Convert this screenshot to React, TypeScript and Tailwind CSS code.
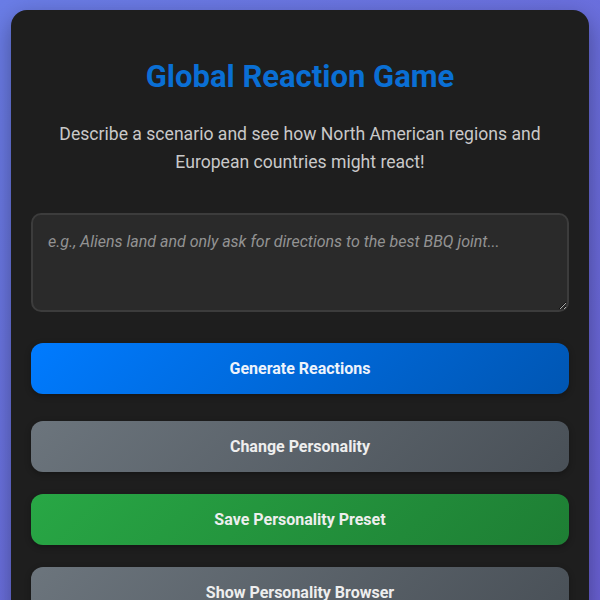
import React, { useState } from 'react';

const App: React.FC = () => {
  const [scenario, setScenario] = useState('');

  const buttons = [
    { label: 'Change Personality', className: 'mt-[27px] bg-linear-135 from-[#6c757d] to-[#495057]' },
    { label: 'Save Personality Preset', className: 'mt-[22px] bg-linear-135 from-[#28a745] to-[#1e7e34]' },
    { label: 'Show Personality Browser', className: 'mt-[22px] bg-linear-135 from-[#6c757d] to-[#495057]' },
  ];

  return (
    <div
      className="min-h-[600px] bg-linear-135 from-[#6a7de6] to-[#6a5fd4] px-[11px] pt-[10px] pb-10"
      style={{ fontFamily: 'Roboto, "Noto Sans", sans-serif' }}
    >
      <div className="bg-[#1e1e1e] rounded-[16px] shadow-[0_8px_24px_rgba(0,0,0,0.35)] px-5 pt-[44px] pb-8">
        {/* Header */}
        <h1 className="text-center text-[31px] leading-[46px] font-bold text-[#0a6fd4]">
          Global Reaction Game
        </h1>
        <p className="mt-[20px] text-center text-[17.6px] leading-[28px] text-[#c9c9c9] px-6">
          Describe a scenario and see how North American regions and European countries might react!
        </p>

        {/* Scenario input */}
        <textarea
          value={scenario}
          onChange={(e) => setScenario(e.target.value)}
          placeholder="e.g., Aliens land and only ask for directions to the best BBQ joint..."
          className="mt-[37px] block w-full h-[99px] rounded-[10px] border-2 border-[#3c3c3c] bg-[#2a2a2a] px-[15px] py-[15px] text-[16px] leading-[24px] text-[#e0e0e0] placeholder:text-[#939393] placeholder:italic focus:outline-none"
        />

        {/* Actions */}
        <button className="mt-[31px] block w-full h-[51px] rounded-[12px] bg-linear-135 from-[#007bff] to-[#0056b3] text-[16px] font-bold text-[#eef3fb] shadow-[0_2px_6px_rgba(0,0,0,0.3)]">
          Generate Reactions
        </button>
        {buttons.map((b) => (
          <button
            key={b.label}
            className={`block w-full h-[51px] rounded-[12px] text-[16px] font-bold text-[#eeeeee] shadow-[0_2px_6px_rgba(0,0,0,0.3)] ${b.className}`}
          >
            {b.label}
          </button>
        ))}
      </div>
    </div>
  );
};

export default App;
